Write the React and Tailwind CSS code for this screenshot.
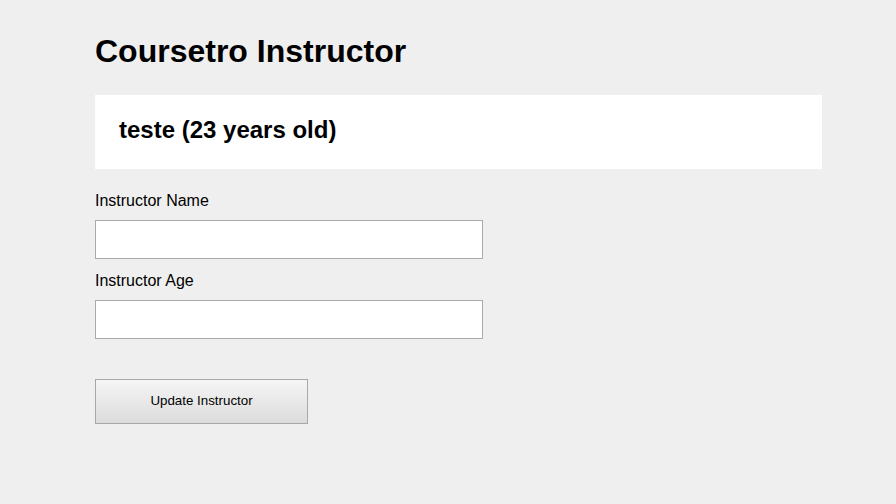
export default function App() {
  return (
    <div
      className="min-h-[504px] w-full bg-[#efefef] text-black"
      style={{ fontFamily: '"Liberation Sans", Arial, sans-serif' }}
    >
      <div className="ml-[95px] w-[727px] pt-[33px]">
        {/* Page title */}
        <h1 className="text-[32px] font-bold leading-[36px]">Coursetro Instructor</h1>

        {/* Instructor card */}
        <div className="mt-[26px] h-[74px] bg-white px-[24px] pt-[21px]">
          <h2 className="text-[24px] font-bold leading-[28px]">teste (23 years old)</h2>
        </div>

        {/* Form */}
        <form className="mt-[23px] flex flex-col" onSubmit={(e) => e.preventDefault()}>
          <label className="text-[16px] leading-[18px]">Instructor Name</label>
          <input
            type="text"
            className="mt-[10px] h-[39px] w-[388px] border border-[#aaaaaa] bg-white px-2 text-[16px] outline-none"
          />
          <label className="mt-[13px] text-[16px] leading-[18px]">Instructor Age</label>
          <input
            type="text"
            className="mt-[10px] h-[39px] w-[388px] border border-[#aaaaaa] bg-white px-2 text-[16px] outline-none"
          />
          <button
            type="submit"
            className="mt-[40px] h-[45px] w-[213px] border border-[#a8a8a8] bg-gradient-to-b from-[#f5f5f5] to-[#dcdcdc] pb-[2px] text-[13.333px] leading-[15px] text-black"
          >
            Update Instructor
          </button>
        </form>
      </div>
    </div>
  );
}
